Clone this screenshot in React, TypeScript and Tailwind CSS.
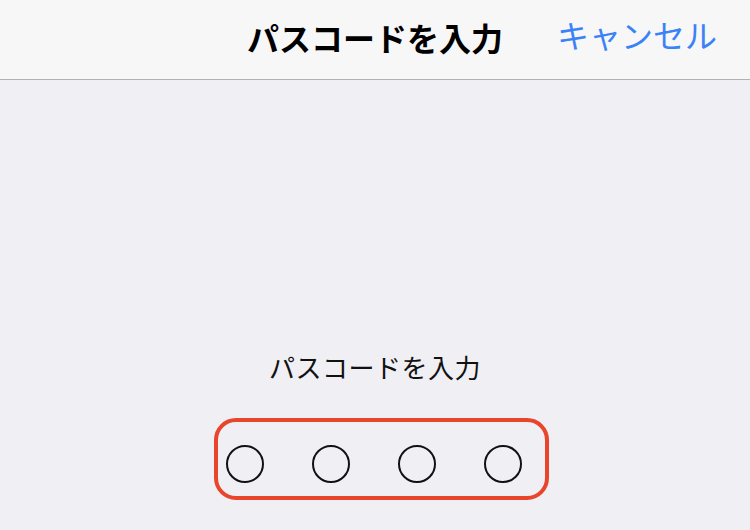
export default function App() {
  const dots = [0, 1, 2, 3];
  return (
    <div
      className="w-[750px] h-[530px] overflow-hidden bg-[#efeff4] flex flex-col"
      style={{ fontFamily: '"Noto Sans CJK JP", "Noto Sans", sans-serif' }}
    >
      {/* Nav bar */}
      <div className="h-[80px] shrink-0 bg-[#f7f7f8] border-b border-[#b1b1b3] relative flex items-center justify-center pb-[6px]">
        <h1 className="text-[32px] font-semibold text-black leading-none">パスコードを入力</h1>
        <button className="absolute right-[33px] top-[18px] text-[32px] leading-none text-[#3a82f7]">
          キャンセル
        </button>
      </div>

      {/* Body */}
      <div className="flex-1 flex flex-col items-center pt-[274px]">
        <p className="text-[26px] leading-none text-[#111] tracking-[0.5px]">パスコードを入力</p>
        <div className="mt-[38px] ml-[12px] border-[4px] border-[#e8452c] rounded-[22px] flex items-center gap-[48px] pl-[8px] pr-[23px] pt-[23px] pb-[13px]">
          {dots.map((d) => (
            <div key={d} className="w-[38px] h-[38px] rounded-full border-2 border-[#111]" />
          ))}
        </div>
      </div>
    </div>
  );
}
